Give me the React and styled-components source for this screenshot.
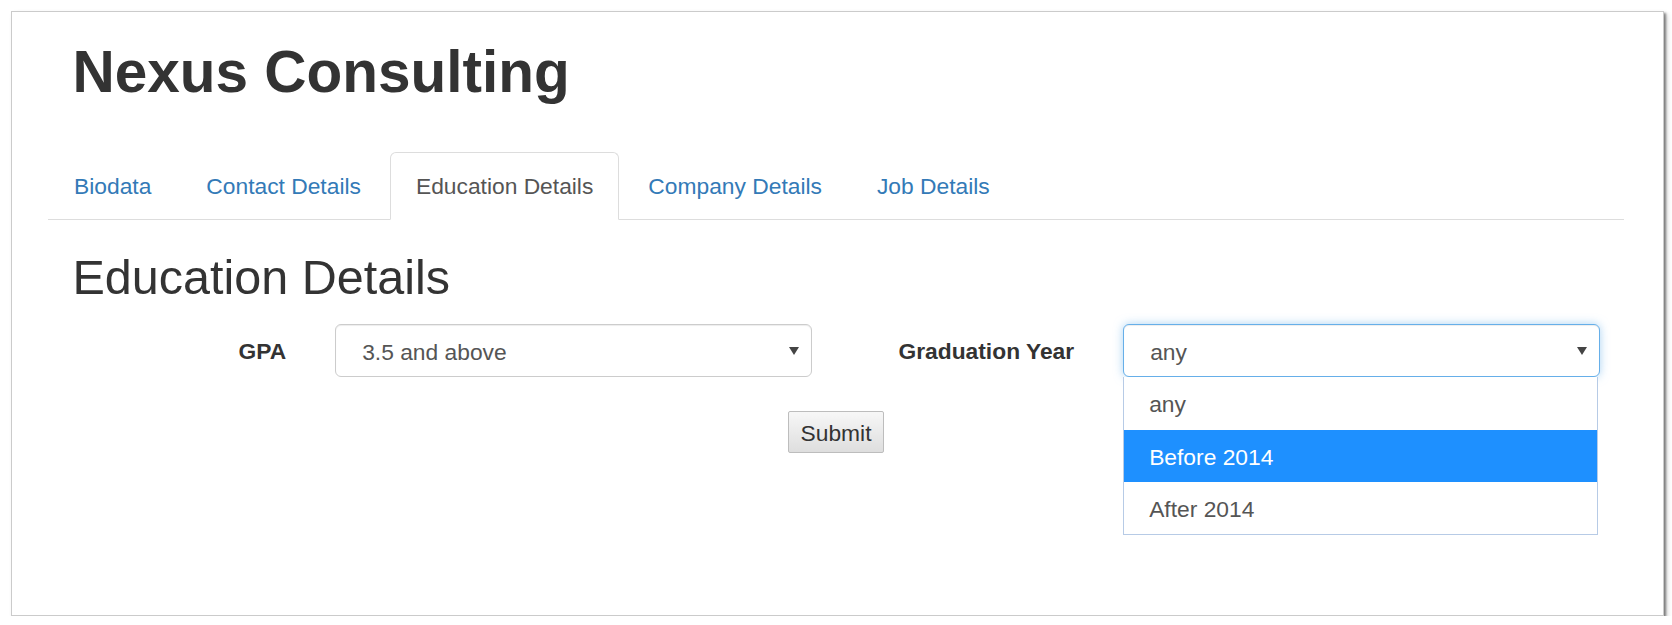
import React from 'react';
import styled, { createGlobalStyle } from 'styled-components';

const GlobalStyle = createGlobalStyle`
  html, body {
    margin: 0;
    padding: 0;
    background: #fff;
  }
  body {
    font-family: "Liberation Sans", Arial, Helvetica, sans-serif;
    color: #333;
  }
  * { box-sizing: border-box; }
`;

const Page = styled.div`
  padding: 11px 0 0 11px;
`;

const Frame = styled.div`
  width: 1653px;
  height: 605px;
  border: 1px solid #cbcbcb;
  box-shadow: 2px 2px 2px rgba(0, 0, 0, 0.4), 3px 3px 5px rgba(0, 0, 0, 0.2);
  padding: 0 39px 0 36px;
  background: #fff;
`;

const Header = styled.h1`
  margin: 27px 0 0;
  padding: 0 24.5px;
  font-size: 58.5px;
  line-height: 66px;
  font-weight: 700;
  color: #333;
`;

const TabList = styled.ul`
  display: flex;
  list-style: none;
  margin: 47px 0 0;
  padding: 0;
  border-bottom: 1px solid #ddd;
`;

const Tab = styled.li`
  margin: 0 3px -1px 0;
  padding: 16px 25px;
  font-size: 22.8px;
  line-height: 34px;
  border: 1px solid ${p => (p.active ? '#ddd' : 'transparent')};
  border-bottom-color: ${p => (p.active ? '#fff' : 'transparent')};
  border-radius: 6px 6px 0 0;
  background: ${p => (p.active ? '#fff' : 'transparent')};
  color: ${p => (p.active ? '#555' : '#337ab7')};
  cursor: pointer;
`;

const Panel = styled.div`
  padding: 0 24.5px;
`;

const SectionTitle = styled.h2`
  margin: 31px 0 0;
  font-size: 48.5px;
  line-height: 53.4px;
  font-weight: 400;
  color: #333;
`;

const FormRow = styled.div`
  display: grid;
  grid-template-columns: 1fr 1fr;
  margin: 20px -24.5px 0;
`;

const Field = styled.div`
  display: grid;
  grid-template-columns: 1fr 2fr;
  align-items: center;
`;

const Label = styled.label`
  text-align: right;
  padding: 2px 24.5px 0 0;
  font-size: 22.8px;
  font-weight: 700;
  color: #333;
`;

const Control = styled.div`
  padding: 0 24.5px;
`;

const SelectWrap = styled.div`
  position: relative;
`;

const Select = styled.div`
  display: flex;
  align-items: center;
  justify-content: space-between;
  height: 53px;
  padding: 3px 12px 0 26px;
  font-size: 22.8px;
  color: #555;
  background: #fff;
  border: 1px solid ${p => (p.focused ? '#66afe9' : '#ccc')};
  border-radius: 6px;
  box-shadow: ${p =>
    p.focused
      ? 'inset 0 1px 1px rgba(0,0,0,.075), 0 0 10px rgba(102,175,233,.55)'
      : 'inset 0 1px 1px rgba(0,0,0,.075)'};
`;

const Arrow = styled.span`
  width: 0;
  height: 0;
  margin-bottom: 3px;
  border-left: 5px solid transparent;
  border-right: 5px solid transparent;
  border-top: 8px solid #444;
`;

const Options = styled.ul`
  position: absolute;
  top: 100%;
  left: 0;
  right: 2px;
  margin: 0;
  padding: 0;
  list-style: none;
  background: #fff;
  border: 1px solid #b7cbe6;
  border-top: none;
  z-index: 2;
`;

const Option = styled.li`
  height: 52.3px;
  line-height: 54px;
  padding-left: 25px;
  font-size: 22.8px;
  color: ${p => (p.selected ? '#fff' : '#555')};
  background: ${p => (p.selected ? '#1e90ff' : '#fff')};
`;

const Actions = styled.div`
  display: flex;
  justify-content: center;
  margin-top: 34px;
`;

const Button = styled.button`
  height: 42px;
  padding: 2px 12px 0;
  font-family: inherit;
  font-size: 22.8px;
  color: #333;
  background: linear-gradient(#f7f7f7, #dedede);
  border: 1px solid #bdbdbd;
  border-radius: 2px;
`;

const tabs = ['Biodata', 'Contact Details', 'Education Details', 'Company Details', 'Job Details'];
const years = ['any', 'Before 2014', 'After 2014'];

const App = () => (
  <Page>
    <GlobalStyle />
    <Frame>
      <Header>Nexus Consulting</Header>
      <TabList>
        {tabs.map(t => (
          <Tab key={t} active={t === 'Education Details'}>{t}</Tab>
        ))}
      </TabList>
      <Panel>
        <SectionTitle>Education Details</SectionTitle>
        <FormRow>
          <Field>
            <Label>GPA</Label>
            <Control>
              <Select>
                <span>3.5 and above</span>
                <Arrow />
              </Select>
            </Control>
          </Field>
          <Field>
            <Label>Graduation Year</Label>
            <Control>
              <SelectWrap>
                <Select focused>
                  <span>any</span>
                  <Arrow />
                </Select>
                <Options>
                  {years.map(y => (
                    <Option key={y} selected={y === 'Before 2014'}>{y}</Option>
                  ))}
                </Options>
              </SelectWrap>
            </Control>
          </Field>
        </FormRow>
        <Actions>
          <Button>Submit</Button>
        </Actions>
      </Panel>
    </Frame>
  </Page>
);

export default App;
